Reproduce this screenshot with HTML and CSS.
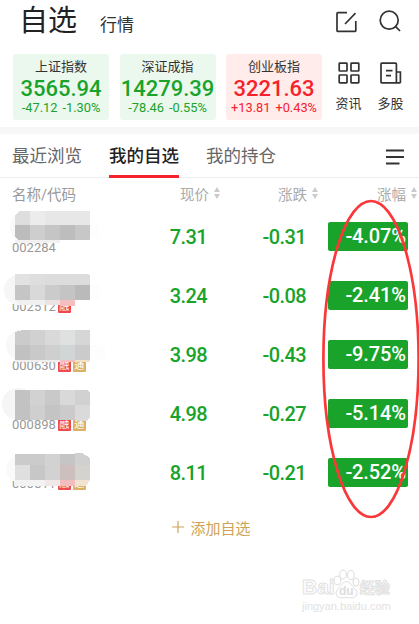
FILE: index.html
```
<!DOCTYPE HTML>
<html lang="zh-CN">
<head>
    <meta charset="utf-8"/>
    <title>自选</title>
    <link rel="stylesheet" href="styles.css">
</head>
<body>
<div class="header">
    <h1>自选</h1>
    <span class="market">行情</span>
    <svg class="icon-edit" width="24" height="24" viewBox="0 0 24 24">
        <path d="M13 2.600H4a1 1 0 0 0-1 1v16.800a1 1 0 0 0 1 1h16.800a1 1 0 0 0 1-1V11M11 14L21.500 3.200"/>
    </svg>
    <svg class="icon-search" width="24" height="24" viewBox="0 0 24 24">
        <circle cx="11.2" cy="11.2" r="9"/>
        <path d="M17.2 17.2L22 22"/>
    </svg>
</div>

<div class="indexes">
    <div class="card down">
        <div class="name">上证指数</div>
        <div class="point">3565.94</div>
        <div class="change"><span>-47.12</span><span>-1.30%</span></div>
    </div>
    <div class="card down">
        <div class="name">深证成指</div>
        <div class="point">14279.39</div>
        <div class="change"><span>-78.46</span><span>-0.55%</span></div>
    </div>
    <div class="card up">
        <div class="name">创业板指</div>
        <div class="point">3221.63</div>
        <div class="change"><span>+13.81</span><span>+0.43%</span></div>
    </div>
    <div class="tool">
        <svg width="24" height="24" viewBox="0 0 24 24">
            <rect x="2.2" y="2.2" width="7.8" height="7.8" rx=".6"/>
            <rect x="14" y="2.2" width="7.8" height="7.8" rx=".6"/>
            <rect x="2.2" y="14" width="7.8" height="7.8" rx=".6"/>
            <rect x="14" y="14" width="7.8" height="7.8" rx=".6"/>
        </svg>
        <span>资讯</span>
    </div>
    <div class="tool">
        <svg width="24" height="24" viewBox="0 0 24 24">
            <path d="M17.400 21.800H2.800a.8.8 0 0 1-.8-.8V3a.8.8 0 0 1 .8-.8h13.800a.8.8 0 0 1 .8.8zM17.400 11h4v10a.8.8 0 0 1-.8.8h-3.200M7 9.600h6.500M7 14.600h5"/>
        </svg>
        <span>多股</span>
    </div>
</div>

<div class="tabs">
    <span class="tab">最近浏览</span>
    <span class="tab active">我的自选</span>
    <span class="tab">我的持仓</span>
    <svg class="icon-menu" width="18" height="16" viewBox="0 0 18 16">
        <path d="M0 1.5h18M0 8h18M0 14.5h13.5"/>
    </svg>
</div>

<div class="stocks">
    <div class="row head">
        <span class="stock">名称/代码</span>
        <span class="price">现价<svg class="sort" width="6" height="12" viewBox="0 0 6 12"><path d="M3 0l3 5H0zM3 12l3-5H0z"/></svg></span>
        <span class="diff">涨跌<svg class="sort" width="6" height="12" viewBox="0 0 6 12"><path d="M3 0l3 5H0zM3 12l3-5H0z"/></svg></span>
        <span class="rate">涨幅<svg class="sort" width="6" height="12" viewBox="0 0 6 12"><path d="M3 0l3 5H0zM3 12l3-5H0z"/></svg></span>
    </div>

    <div class="row">
        <div class="stock">
            <span class="code">002284</span>
            <svg class="mosaic" width="110" height="59" shape-rendering="crispEdges">
                <ellipse cx="20" cy="20" rx="10" ry="13" fill="#f9f9f9"/>
                <rect x="15" y="33" width="45" height="3" fill="#f1f1f1"/>
                <rect x="90" y="18" width="9" height="13" fill="#fdfdfd"/>
                <path d="M15 18V8l4-4h11v14z" fill="#dedede"/>
                <rect x="30" y="4" width="15" height="14" fill="#ececec"/>
                <rect x="45" y="4" width="45" height="14" fill="#e7e7e7"/>
                <path d="M15 18h15v15H18l-3-3z" fill="#bcbcbc"/>
                <rect x="30" y="18" width="15" height="15" fill="#cecece"/>
                <rect x="45" y="18" width="15" height="15" fill="#c5c5c5"/>
                <rect x="60" y="18" width="15" height="15" fill="#bdbdbd"/>
                <rect x="75" y="18" width="15" height="15" fill="#c7c7c7"/>
            </svg>
        </div>
        <span class="price">7.31</span>
        <span class="diff">-0.31</span>
        <span class="rate"><b>-4.07%</b></span>
    </div>

    <div class="row">
        <div class="stock">
            <span class="code">002512</span><i class="tag rong">融</i>
            <svg class="mosaic" width="110" height="59" shape-rendering="crispEdges">
                <ellipse cx="19" cy="24" rx="15" ry="15" fill="#f6f6f6"/>
                <rect x="90" y="19" width="10" height="14" fill="#fdfdfd"/>
                <path d="M15 34h30v5H20z" fill="#f0f0f0"/>
                <rect x="45" y="34" width="15" height="5" fill="#ece2e2"/>
                <rect x="60" y="34" width="15" height="6" fill="#f5bfc0"/>
                <rect x="15" y="8" width="15" height="11" fill="#e2e2e2"/>
                <rect x="30" y="8" width="15" height="11" fill="#dedede"/>
                <path d="M45 8h43l2 1v10H45z" fill="#dcdcdc"/>
                <rect x="15" y="19" width="15" height="15" fill="#c5c5c5"/>
                <rect x="30" y="19" width="15" height="15" fill="#d9d9d9"/>
                <rect x="45" y="19" width="15" height="15" fill="#cbcbcb"/>
                <rect x="60" y="19" width="15" height="15" fill="#c4c4c4"/>
                <rect x="75" y="19" width="15" height="15" fill="#bababa"/>
            </svg>
        </div>
        <span class="price">3.24</span>
        <span class="diff">-0.08</span>
        <span class="rate"><b>-2.41%</b></span>
    </div>

    <div class="row">
        <div class="stock">
            <span class="code">000630</span><i class="tag rong">融</i><i class="tag tong">通</i>
            <svg class="mosaic" width="110" height="59" shape-rendering="crispEdges">
                <ellipse cx="20" cy="20" rx="14" ry="15" fill="#f8f8f8"/>
                <rect x="90" y="20" width="15" height="15" fill="#fdfdfd"/>
                <rect x="15" y="35" width="45" height="2" fill="#f1eeee"/>
                <rect x="60" y="35" width="15" height="2" fill="#f5bfc0"/>
                <rect x="75" y="35" width="15" height="2" fill="#f2e2c8"/>
                <path d="M15 20V7l8-2h7v15z" fill="#cbcbcb"/>
                <rect x="30" y="5" width="15" height="15" fill="#d1d1d1"/>
                <rect x="45" y="5" width="15" height="15" fill="#d9d9d9"/>
                <rect x="60" y="5" width="15" height="15" fill="#dfe1e1"/>
                <rect x="75" y="5" width="15" height="15" fill="#d6d6d6"/>
                <rect x="15" y="20" width="15" height="15" fill="#c1c1c1"/>
                <rect x="30" y="20" width="15" height="15" fill="#c9c9c9"/>
                <rect x="45" y="20" width="15" height="15" fill="#cfcfcf"/>
                <rect x="60" y="20" width="15" height="15" fill="#d2d5d5"/>
                <rect x="75" y="20" width="15" height="15" fill="#cbcbcb"/>
            </svg>
        </div>
        <span class="price">3.98</span>
        <span class="diff">-0.43</span>
        <span class="rate"><b>-9.75%</b></span>
    </div>

    <div class="row">
        <div class="stock">
            <span class="code">000898</span><i class="tag rong">融</i><i class="tag tong">通</i>
            <svg class="mosaic" width="110" height="59" shape-rendering="crispEdges">
                <ellipse cx="18" cy="20" rx="16" ry="16" fill="#f6f6f6"/>
                <rect x="15" y="6" width="15" height="30" fill="#c2c2c2"/>
                <rect x="30" y="6" width="15" height="15" fill="#d2d2d2"/>
                <rect x="45" y="6" width="15" height="15" fill="#c9c9c9"/>
                <rect x="60" y="6" width="15" height="15" fill="#d9d9d9"/>
                <path d="M75 6h13l2 3v12H75z" fill="#d1d1d1"/>
                <rect x="30" y="21" width="15" height="15" fill="#cfcfcf"/>
                <rect x="45" y="21" width="15" height="15" fill="#c4c4c4"/>
                <rect x="60" y="21" width="15" height="15" fill="#cdcacb"/>
                <path d="M75 21h15v12l-3 4H75z" fill="#dadada"/>
            </svg>
        </div>
        <span class="price">4.98</span>
        <span class="diff">-0.27</span>
        <span class="rate"><b>-5.14%</b></span>
    </div>

    <div class="row">
        <div class="stock">
            <span class="code">000511</span><i class="tag rong">融</i><i class="tag tong">通</i>
            <svg class="mosaic" width="110" height="59" shape-rendering="crispEdges">
                <ellipse cx="20" cy="26" rx="14" ry="14" fill="#fafafa"/>
                <rect x="15" y="37" width="30" height="6" fill="#f3f3f3"/>
                <rect x="45" y="37" width="15" height="6" fill="#f3e8e8"/>
                <rect x="60" y="37" width="15" height="6" fill="#f4bdbd"/>
                <path d="M75 37h15l-4 6H75z" fill="#f0e3d0"/>
                <path d="M15 11h30v11H15z" fill="#cbcbcb"/>
                <rect x="45" y="11" width="15" height="11" fill="#d2d2d2"/>
                <rect x="60" y="11" width="15" height="11" fill="#c5c5c5"/>
                <path d="M75 10h7l8 5v7H75z" fill="#d0d0d0"/>
                <rect x="15" y="22" width="15" height="15" fill="#dfdfdf"/>
                <rect x="30" y="22" width="15" height="15" fill="#c7c7c7"/>
                <rect x="45" y="22" width="15" height="15" fill="#d2d2d2"/>
                <rect x="60" y="22" width="15" height="15" fill="#cdbfbe"/>
                <rect x="75" y="22" width="15" height="15" fill="#d5d3ce"/>
            </svg>
        </div>
        <span class="price">8.11</span>
        <span class="diff">-0.21</span>
        <span class="rate"><b>-2.52%</b></span>
    </div>
</div>

<div class="add">
    <svg width="12" height="12" viewBox="0 0 12 12"><path d="M6 0v12M0 6h12"/></svg>
    <span>添加自选</span>
</div>

<!-- red circle over the rate column -->
<svg class="mark" width="99" height="322" viewBox="0 0 99 322">
    <ellipse cx="50" cy="161" rx="47.6" ry="158"/>
</svg>

<div class="watermark">
    <div class="logo">
        <span class="bai">Bai</span>
        <svg width="27" height="30" viewBox="0 0 27 30">
            <ellipse cx="4.5" cy="11.5" rx="3.3" ry="4.3"/>
            <ellipse cx="10" cy="5.5" rx="3.3" ry="4.5"/>
            <ellipse cx="17.8" cy="6" rx="3.3" ry="4.5"/>
            <ellipse cx="23" cy="13" rx="3" ry="4"/>
            <path d="M13.5 12.5c3.5 0 4.8 3.5 7 5.7 2.5 2.6 4.3 4.3 3 7.8-1.6 4-6 2.6-10 2.6s-8.4 1.4-10-2.6c-1.3-3.5.5-5.2 3-7.8 2.2-2.2 3.5-5.7 7-5.7z"/>
            <text x="13.3" y="26">du</text>
        </svg>
        <span class="jy">经验</span>
    </div>
    <div class="site">jingyan.baidu.com</div>
</div>
</body>
</html>
```

FILE: styles.css
```
body {
    position: relative;
    width: 419px;
    height: 624px;
    margin: 0;
    overflow: hidden;
    background: #fff;
    color: #333;
    font-family: Roboto, "Noto Sans CJK SC", sans-serif;
}

svg {
    display: block;
    flex: none;
    fill: none;
    stroke: #333;
    stroke-width: 1.7;
}

.header {
    display: flex;
    align-items: center;
    height: 42px;
    padding: 0 17px 12px 19px;
}

.header h1 {
    margin: 0;
    font-size: 29px;
    font-weight: 400;
    line-height: 42px;
    color: #222;
}

.header .market {
    margin: 8px auto 0 23px;
    font-size: 17px;
    line-height: 24px;
}

.icon-edit {
    margin-top: 2px;
}

.icon-search {
    margin-left: 20px;
}

.indexes {
    display: flex;
    height: 73px;
    padding-left: 13px;
    border-bottom: 7px solid #f7f7f7;
}

.card {
    width: 96px;
    height: 66px;
    margin-right: 10.5px;
    border-radius: 3px;
    text-align: center;
    white-space: nowrap;
}

.card.down {
    background: #ebf8ee;
    color: #19a32a;
}

.card.up {
    background: #ffeceb;
    color: #f5222b;
}

.card .name {
    height: 22px;
    padding-top: 2px;
    font-size: 13px;
    line-height: 21px;
    color: #333;
}

.card .point {
    font-size: 22px;
    font-weight: 500;
    line-height: 22px;
}

.card .change {
    display: flex;
    justify-content: center;
    gap: 5px;
    font-size: 12.8px;
    line-height: 16px;
}

.tool {
    display: flex;
    flex-direction: column;
    align-items: center;
    width: 42px;
    margin-left: -5px;
    padding-top: 7px;
    font-size: 13px;
    line-height: 18px;
}

.tool + .tool {
    margin-left: 0;
}

.tool span {
    margin-top: 10px;
}

.tabs {
    display: flex;
    align-items: center;
    height: 43px;
    padding: 0 15px 0 12px;
    border-bottom: 1px solid #eee;
    font-size: 17.5px;
    color: #666;
}

.tab {
    height: 41px;
    margin-right: 27px;
    border-bottom: 3px solid transparent;
    line-height: 45px;
}

.tab.active {
    border-color: #f5222b;
    font-weight: 500;
    color: #222;
}

.icon-menu {
    margin-top: 2px;
    margin-left: auto;
    stroke-width: 2;
}

.row {
    display: grid;
    grid-template-columns: 110px 97px 99px 102px;
    align-items: center;
    height: 59px;
    font-size: 20px;
    text-align: right;
    color: #19a32a;
}

.row > .price,
.row > .diff {
    font-weight: 500;
    letter-spacing: -.6px;
}

.row.head {
    grid-template-columns: 110px 110px 98px 99px;
    height: 28px;
    padding-top: 1px;
    font-size: 14.5px;
    color: #999;
}

.head .stock {
    height: auto;
    padding: 0 0 0 12px;
}

.row.head > .price,
.row.head > .diff,
.row.head > .rate {
    display: flex;
    align-items: center;
    justify-content: flex-end;
    gap: 5px;
    font-weight: 400;
    letter-spacing: 0;
    color: #aaa;
}

.sort {
    fill: #ccc;
    stroke: none;
}

.stock {
    position: relative;
    display: flex;
    box-sizing: border-box;
    height: 59px;
    padding: 34px 0 0 12px;
    gap: 2px;
}

.code {
    font-size: 13px;
    line-height: 14px;
    color: #999;
}

.tag {
    width: 13px;
    height: 13px;
    border-radius: 1px;
    font-size: 10px;
    font-style: normal;
    line-height: 13px;
    text-align: center;
    color: #fff;
}

.rong {
    background: #ee4a50;
}

.tong {
    background: #dcb062;
}

.mosaic {
    position: absolute;
    left: 0;
    top: 0;
    stroke: none;
}

.row b {
    display: inline-block;
    box-sizing: border-box;
    width: 80px;
    height: 29px;
    padding-right: 2px;
    border-radius: 2px;
    background: #19a32a;
    font-weight: 500;
    letter-spacing: -.1px;
    line-height: 29px;
    color: #fff;
}

.add {
    display: flex;
    align-items: center;
    justify-content: center;
    height: 24px;
    margin-top: 13px;
    padding-left: 4px;
    gap: 6px;
    font-size: 15px;
    color: #cda357;
}

.add svg {
    stroke: #cda357;
    stroke-width: 1.2;
}

.mark {
    position: absolute;
    left: 321px;
    top: 198px;
    stroke: #fb3839;
    stroke-width: 2.7;
}

.watermark {
    position: absolute;
    left: 302px;
    top: 569px;
    color: #fff;
    -webkit-text-stroke: 1px #e2e2e2;
    font-family: "Liberation Sans", "Noto Sans CJK SC", sans-serif;
}

.logo {
    display: flex;
    align-items: flex-end;
    height: 30px;
}

.logo svg {
    margin-left: -2px;
    stroke: #ddd;
    stroke-width: 1;
}

.logo text {
    fill: #ddd;
    stroke: none;
    font-size: 12px;
    font-weight: 700;
    text-anchor: middle;
    -webkit-text-stroke: 0;
}

.bai {
    font-size: 21px;
    font-weight: 700;
    line-height: 24px;
}

.jy {
    font-size: 15px;
    font-weight: 700;
    line-height: 22px;
}

.site {
    font-size: 11px;
    line-height: 14px;
    -webkit-text-stroke: 0;
    color: #e2e2e2;
}
```
